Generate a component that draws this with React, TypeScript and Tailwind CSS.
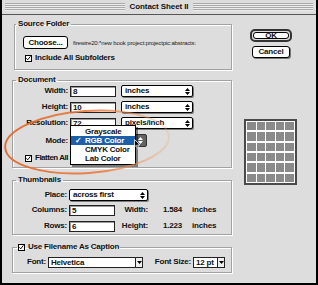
import React from 'react';

const label = 'text-[8px] font-bold leading-[10px] tracking-[-0.2px] text-[#111] whitespace-nowrap';

const CheckBox: React.FC = () => (
  <span className="inline-flex w-[7px] h-[7px] border border-black bg-white shrink-0">
    <svg width="7" height="7" viewBox="0 0 7 7" className="-mt-[1px]">
      <path d="M0.5 3.2 L2.4 5.4 L6.2 0.4" stroke="#000" strokeWidth="1.3" fill="none" />
    </svg>
  </span>
);

const UpDown: React.FC<{ color?: string }> = ({ color = '#000' }) => (
  <svg width="5" height="7" viewBox="0 0 5 7">
    <path d="M2.5 0 L5 3 L0 3 Z M0 4 L5 4 L2.5 7 Z" fill={color} />
  </svg>
);

const Popup: React.FC<{ value: string; className?: string }> = ({ value, className = '' }) => (
  <div className={`flex h-[12px] items-center bg-white border border-black rounded-[2px] shadow-[1px_1px_0_#7a7a7a] ${className}`}>
    <span className={`flex-1 pl-[3px] overflow-hidden ${label}`}>{value}</span>
    <span className="w-[10px] flex justify-center">
      <UpDown />
    </span>
  </div>
);

const DropBox: React.FC<{ value: string; className?: string }> = ({ value, className = '' }) => (
  <div className={`flex h-[11px] items-stretch bg-white border border-[#222] ${className}`}>
    <span className={`flex-1 pl-[2px] ${label}`}>{value}</span>
    <span className="w-[7px] border-l border-[#222] flex items-center justify-center bg-[#eee]">
      <svg width="5" height="3" viewBox="0 0 5 3"><path d="M0 0 L5 0 L2.5 3 Z" fill="#000" /></svg>
    </span>
  </div>
);

const Field: React.FC<{ value: string; className?: string }> = ({ value, className = '' }) => (
  <div className={`h-[11px] border border-[#222] bg-white pl-[2px] shadow-[inset_1px_1px_0_#999] ${label} ${className}`}>
    {value}
  </div>
);

const group = 'border border-[#a2a2a2] shadow-[inset_1px_1px_0_#fff,1px_1px_0_#fff]';

export default function App() {
  const cells = Array.from({ length: 30 });
  return (
    <div className="relative w-[318px] h-[285px] bg-[#dddddd] border-l-2 border-r-2 border-b-2 border-black font-['Liberation_Sans',Arial,sans-serif] overflow-hidden">
      {/* title bar */}
      <div className="h-[15px] flex items-center px-[3px] border-b border-[#555]">
        <div className="flex-1 h-[8px] bg-[repeating-linear-gradient(to_bottom,#a9a9a9_0px,#a9a9a9_1px,#ececec_1px,#ececec_2px)]" />
        <span className="px-[5px] text-[8px] font-bold tracking-[-0.1px] text-[#111]">Contact Sheet II</span>
        <div className="flex-1 h-[8px] bg-[repeating-linear-gradient(to_bottom,#a9a9a9_0px,#a9a9a9_1px,#ececec_1px,#ececec_2px)]" />
      </div>

      <div className="flex pl-[10px]">
        {/* left column */}
        <div className="w-[220px]">
          <fieldset className={`ml-[2px] w-[218px] mt-[4px] pb-[6px] ${group}`}>
            <legend className={`ml-[1px] px-[2px] ${label}`}>Source Folder</legend>
            <div className="flex items-center mt-[7px] ml-[8px]">
              <div className={`w-[45px] h-[13px] border border-black rounded-[3px] bg-white flex items-center justify-center ${label}`}>
                Choose...
              </div>
              <span className="ml-[5px] text-[6px] leading-[8px] tracking-[-0.15px] text-[#222] whitespace-nowrap">
                firewire20:*new book project:projectpic:abstracts:
              </span>
            </div>
            <div className="flex items-center h-[10px] mt-[4px] ml-[10px] gap-[3px]">
              <CheckBox />
              <span className={label}>Include All Subfolders</span>
            </div>
          </fieldset>

          <fieldset className={`mt-[5px] w-[220px] pb-[4px] ${group}`}>
            <legend className={`ml-[3px] px-[2px] ${label}`}>Document</legend>
            <div className="flex items-center h-[12px]">
              <span className={`w-[55px] text-right ${label}`}>Width:</span>
              <Field value="8" className="ml-[2px] w-[46px] bg-[#8dcfdf]" />
              <Popup value="inches" className="ml-[5px] w-[72px]" />
            </div>
            <div className="flex items-center h-[12px] mt-[4px]">
              <span className={`w-[55px] text-right ${label}`}>Height:</span>
              <Field value="10" className="ml-[2px] w-[46px]" />
              <Popup value="inches" className="ml-[5px] w-[72px]" />
            </div>
            <div className="flex items-center h-[12px] mt-[4px]">
              <span className={`w-[55px] text-right ${label}`}>Resolution:</span>
              <Field value="72" className="ml-[2px] w-[46px]" />
              <Popup value="pixels/inch" className="ml-[5px] w-[72px]" />
            </div>
            <div className="flex items-center h-[13px] mt-[5px]">
              <span className={`w-[55px] text-right ${label}`}>Mode:</span>
              <div className="ml-[2px] w-[77px] h-[13px] bg-[#626262] border border-[#333] rounded-[2px] flex justify-end items-center pr-[3px]">
                <UpDown color="#fff" />
              </div>
            </div>
            <div className="flex items-center h-[10px] mt-[6px] ml-[12px] gap-[3px]">
              <CheckBox />
              <span className="text-[8px] font-bold leading-[10px] tracking-[-0.5px] text-[#111] whitespace-nowrap">Flatten All</span>
            </div>
          </fieldset>

          <fieldset className={`mt-[7px] w-[220px] pb-[2px] ${group}`}>
            <legend className={`ml-[3px] px-[2px] ${label}`}>Thumbnails</legend>
            <div className="flex items-center h-[12px] mt-[4px]">
              <span className={`w-[54px] text-right ${label}`}>Place:</span>
              <Popup value="across first" className="ml-[2px] w-[79px]" />
            </div>
            <div className="flex items-center h-[12px] mt-[3px]">
              <span className={`w-[54px] text-right ${label}`}>Columns:</span>
              <Field value="5" className="ml-[2px] w-[46px]" />
              <span className={`w-[33px] text-right ${label}`}>Width:</span>
              <span className={`ml-[15px] w-[29px] ${label}`}>1.584</span>
              <span className={label}>inches</span>
            </div>
            <div className="flex items-center h-[12px] mt-[4px]">
              <span className={`w-[54px] text-right ${label}`}>Rows:</span>
              <Field value="6" className="ml-[2px] w-[46px]" />
              <span className={`w-[33px] text-right ${label}`}>Height:</span>
              <span className={`ml-[15px] w-[29px] ${label}`}>1.223</span>
              <span className={label}>inches</span>
            </div>
          </fieldset>

          <fieldset className={`mt-[7px] w-[220px] pb-[4px] ${group}`}>
            <legend className={`ml-[4px] px-[1px] flex items-center gap-[3px] ${label}`}>
              <CheckBox />
              <span>Use Filename As Caption</span>
            </legend>
            <div className="flex items-center h-[12px] mt-[4px]">
              <span className={`ml-[14px] w-[19px] ${label}`}>Font:</span>
              <DropBox value="Helvetica" className="ml-[2px] w-[95px]" />
              <span className={`ml-[9px] w-[39px] text-right ${label}`}>Font Size:</span>
              <DropBox value="12 pt" className="ml-[2px] w-[32px]" />
            </div>
          </fieldset>
        </div>

        {/* right column */}
        <div className="flex flex-col">
          <div className="mt-[14px] ml-[18px] w-[42px] h-[13px] border-2 border-[#333] rounded-[5px] p-[1px]">
            <div className={`h-full border border-black rounded-[3px] bg-white flex items-center justify-center ${label}`}>OK</div>
          </div>
          <div className={`mt-[4px] ml-[20px] w-[38px] h-[12px] border border-black rounded-[3px] bg-white shadow-[1px_1px_0_#777] flex items-center justify-center ${label}`}>
            Cancel
          </div>
          <div className="mt-[61px] ml-[12px] w-[53px] h-[66px] border-2 border-[#4a4a4a] bg-white p-[1px]">
            <div className="grid grid-cols-5 gap-x-[1px] gap-y-[2px] h-full bg-white">
              {cells.map((_, i) => (
                <div key={i} className="bg-[#8a8a8a]" />
              ))}
            </div>
          </div>
        </div>
      </div>

      {/* open Mode menu */}
      <div className="absolute left-[68px] top-[125px] w-[66px] bg-white border border-black shadow-[2px_2px_0_rgba(0,0,0,0.45)] py-[1px]">
        <div className={`h-[9px] pl-[14px] ${label} leading-[9px]`}>Grayscale</div>
        <div className={`h-[9px] pl-[4px] flex bg-[#1d5ea8] text-white ${label} leading-[9px]`}>
          <span className="w-[10px] text-white">✓</span>
          <span className="text-white">RGB Color</span>
        </div>
        <div className={`h-[9px] pl-[14px] ${label} leading-[9px]`}>CMYK Color</div>
        <div className={`h-[9px] pl-[14px] ${label} leading-[9px]`}>Lab Color</div>
      </div>

      {/* mouse pointer */}
      <svg className="absolute left-[132px] top-[139px]" width="7" height="10" viewBox="0 0 7 10">
        <path d="M0.5 0.5 L0.5 8 L2.3 6.3 L3.6 9.3 L4.8 8.8 L3.6 5.9 L6 5.9 Z" fill="#000" stroke="#fff" strokeWidth="0.8" />
      </svg>

      {/* orange annotation */}
      <svg className="absolute left-0 top-[100px] pointer-events-none" width="180" height="85" viewBox="0 0 180 85">
        <defs>
          <linearGradient id="fade" x1="0" y1="0" x2="1" y2="0">
            <stop offset="0" stopColor="#e2682a" stopOpacity="0.95" />
            <stop offset="0.6" stopColor="#e8793c" stopOpacity="0.85" />
            <stop offset="1" stopColor="#f3a46e" stopOpacity="0.25" />
          </linearGradient>
        </defs>
        <ellipse cx="85" cy="42" rx="82" ry="31" transform="rotate(-4 85 42)" fill="none" stroke="url(#fade)" strokeWidth="2" />
      </svg>
    </div>
  );
}
